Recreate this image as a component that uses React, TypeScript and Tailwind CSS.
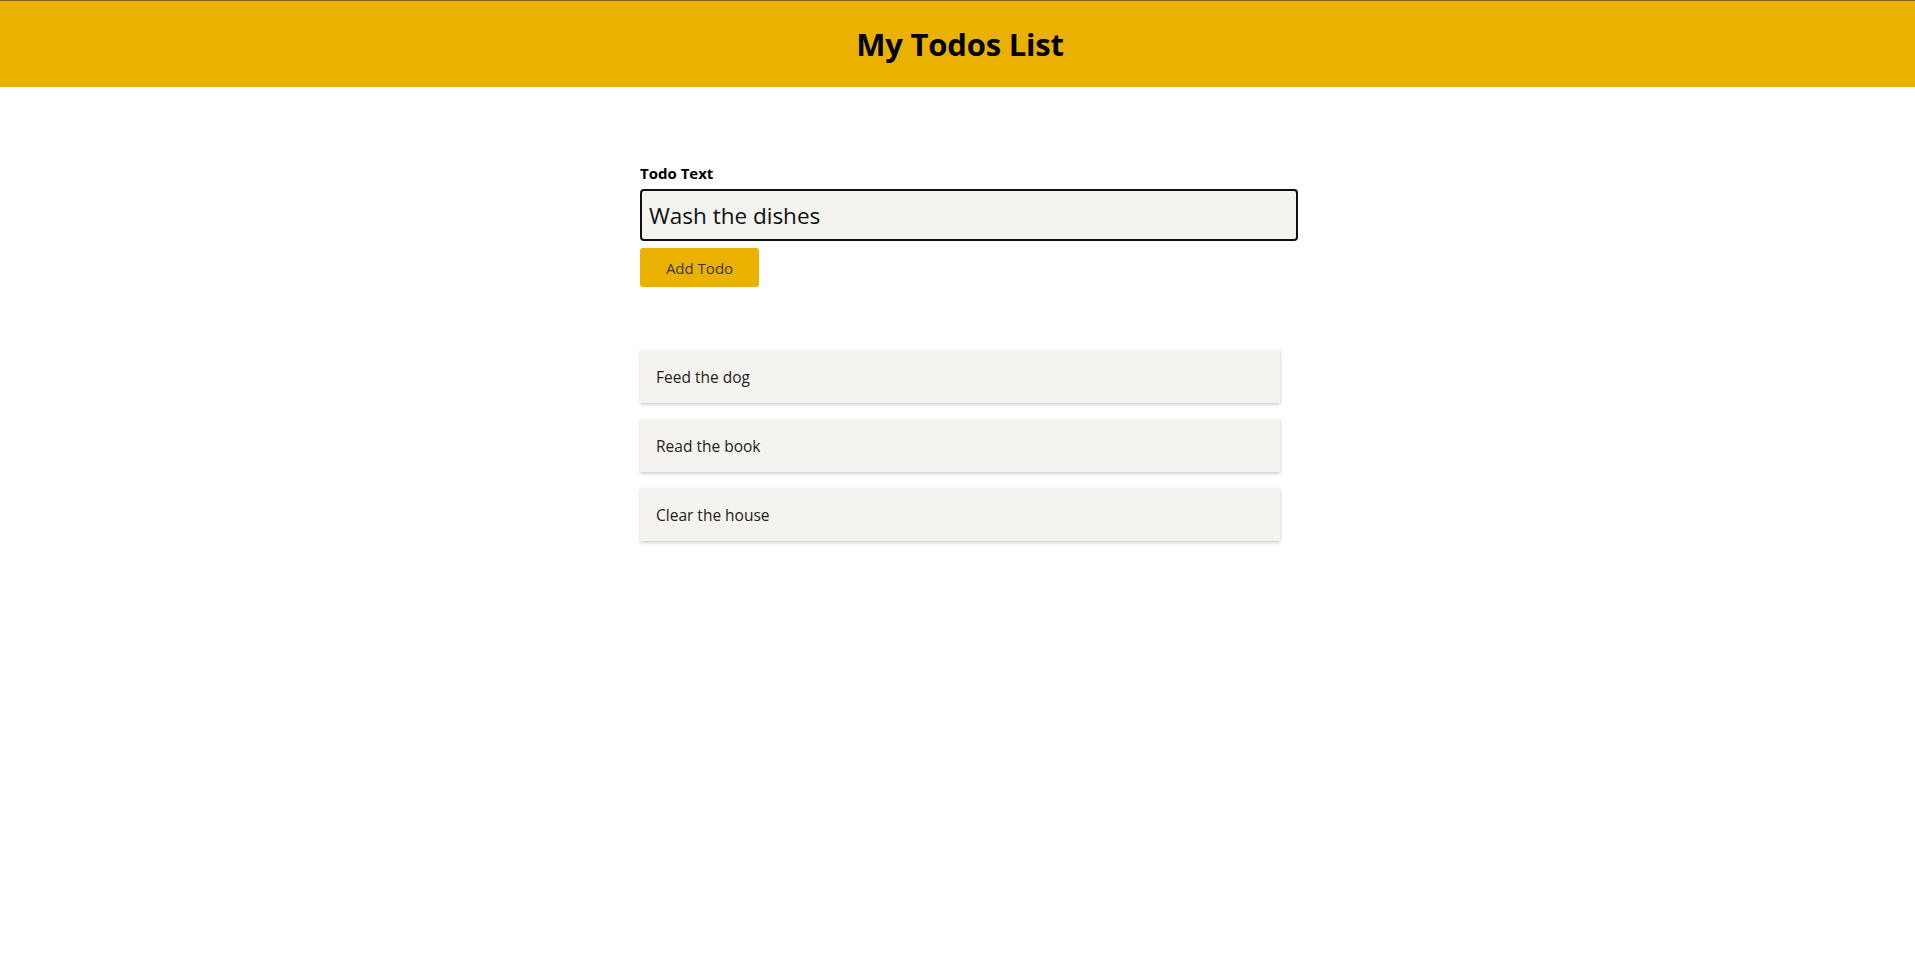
import { useState } from 'react'

const initialTodos = ['Feed the dog', 'Read the book', 'Clear the house']

export default function App() {
  const [text, setText] = useState('Wash the dishes')
  const [todos, setTodos] = useState(initialTodos)

  const addTodo = (e: React.FormEvent) => {
    e.preventDefault()
    if (!text.trim()) return
    setTodos([...todos, text.trim()])
    setText('')
  }

  return (
    <div className="min-h-screen bg-white text-black" style={{ fontFamily: '"Open Sans", "Noto Sans", sans-serif' }}>
      <header className="h-[87px] border-t border-[#7d6420] bg-[#ebb100] flex items-center justify-center pl-[5px]">
        <h1 className="text-[31px] font-bold leading-none tracking-[-0.2px]">My Todos List</h1>
      </header>

      <main className="mx-auto w-[645px] pl-[5px] pt-[76px]">
        <form onSubmit={addTodo}>
          <label htmlFor="todo-text" className="block text-[15px] font-bold leading-[20px] mb-[6px]">
            Todo Text
          </label>
          <input
            id="todo-text"
            type="text"
            value={text}
            onChange={e => setText(e.target.value)}
            className="block w-[658px] h-[52px] border-2 border-[#111] rounded-[4px] bg-[#f5f3ef] px-[7px] text-[22.5px] text-[#111] outline-none"
          />
          <button
            type="submit"
            className="mt-[7px] w-[119px] h-[39px] pt-[2px] rounded-[3px] bg-[#ebb100] text-[15px] text-[#3a3a3a]"
          >
            Add Todo
          </button>
        </form>

        {/* todo list */}
        <ul className="mt-[63px] flex flex-col gap-4">
          {todos.map(todo => (
            <li
              key={todo}
              className="h-[53px] px-4 pt-[3px] flex items-center bg-[#f5f3ef] text-[15.5px] text-[#222] shadow-[0_2px_3px_rgba(0,0,0,0.16),1px_0_2px_rgba(0,0,0,0.06)]"
            >
              {todo}
            </li>
          ))}
        </ul>
      </main>
    </div>
  )
}
